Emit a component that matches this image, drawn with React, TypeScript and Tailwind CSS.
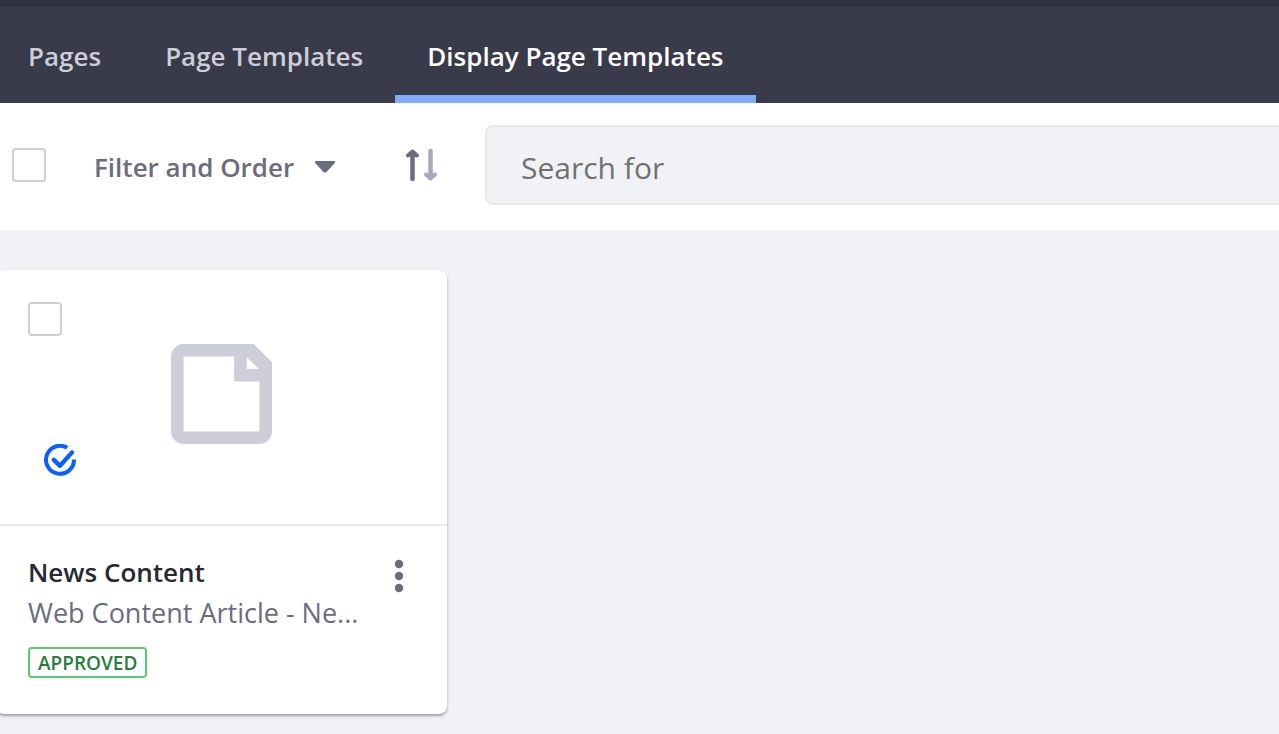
import { useState } from "react";

const tabs = ["Pages", "Page Templates", "Display Page Templates"];

const checkboxClass =
  "block size-[34px] shrink-0 cursor-pointer appearance-none rounded-[4px] border-2 border-[#cdced9] bg-white checked:border-[#0b5fff] checked:bg-[#0b5fff]";

function NavigationBar() {
  const [active, setActive] = useState("Display Page Templates");
  return (
    <nav className="border-t-[7px] border-[#30313f] bg-[#393a4a]">
      <ul className="flex h-24">
        {tabs.map((tab) => (
          <li key={tab} className="flex first:-ml-1">
            <a
              href="#"
              aria-current={tab === active ? "page" : undefined}
              onClick={(event) => {
                event.preventDefault();
                setActive(tab);
              }}
              className={
                tab === active
                  ? "flex items-center border-b-8 border-[#80acff] px-8 pt-2.5 text-[26px] font-semibold whitespace-nowrap text-white"
                  : "flex items-center border-b-8 border-transparent px-8 pt-2.5 text-[26px] font-semibold whitespace-nowrap text-[#cdced9]"
              }
            >
              {tab}
            </a>
          </li>
        ))}
      </ul>
    </nav>
  );
}

function ManagementBar() {
  return (
    <div className="flex items-center overflow-hidden bg-white pt-[22px] pb-[25px] pl-3">
      <input type="checkbox" aria-label="Select all items" className={checkboxClass} />
      <button
        type="button"
        className="ml-12 flex w-[242px] shrink-0 items-center justify-between pt-1 text-[26px] leading-9 font-semibold whitespace-nowrap text-[#6b6c7e]"
      >
        Filter and Order
        <svg width="22" height="14" viewBox="0 0 22 14" fill="currentColor" aria-hidden="true">
          <path d="M2 1h18c1.300 0 1.600 1.100.8 1.900l-8.300 9c-.8.800-2.200.8-3 0L1.200 2.900C.4 2.100.7 1 2 1z" />
        </svg>
      </button>
      <button type="button" aria-label="Reverse sort direction" className="ml-[69px] shrink-0">
        <svg width="33" height="34" viewBox="0 0 33 34" fill="none" aria-hidden="true">
          <path d="M7.500 4.500V31" stroke="#6b6c7e" strokeWidth="4.500" strokeLinecap="round" />
          <path d="M3 7.500L7.500 3.500L12 7.500V7.600L7.500 5.500L3 7.500z" stroke="#6b6c7e" strokeWidth="4" strokeLinecap="round" strokeLinejoin="round" />
          <path d="M25.500 3V29.500" stroke="#a7a9bc" strokeWidth="4.500" strokeLinecap="round" />
          <path d="M21 26.500L25.500 30.500L30 26.500L25.500 28.500z" stroke="#a7a9bc" strokeWidth="4" strokeLinecap="round" strokeLinejoin="round" />
        </svg>
      </button>
      <input
        type="search"
        aria-label="Search for"
        placeholder="Search for"
        className="-mr-2 ml-[47px] h-20 min-w-0 grow rounded-lg border-2 border-[#e7e7ed] bg-[#f1f2f5] px-[34px] pt-1 text-[30px] text-[#272833] placeholder:text-[#717171]"
      />
    </div>
  );
}

function TemplateCard() {
  return (
    <article className="-ml-1 w-[451px] overflow-hidden rounded-lg bg-white shadow-[0_2px_4px_-1px_rgba(0,0,0,0.3),0_2px_2px_rgba(0,0,0,0.16)]">
      <div className="grid h-64 grid-cols-3 border-b-2 border-[#e7e7ed] px-8 py-8">
        <div className="flex flex-col justify-between pb-4">
          <input type="checkbox" aria-label="Select News Content" className={checkboxClass} />
          <svg className="ml-4" width="32" height="32" viewBox="0 0 32 32" fill="none" role="img" aria-label="Default template">
            <path
              d="M23.200 3.800A14 14 0 1 0 30 15.500"
              stroke="#0b5fff"
              strokeWidth="4"
            />
            <path
              d="M9.800 15.800L16 21.800L28 8.400"
              stroke="#0b5fff"
              strokeWidth="4.400"
              strokeLinecap="round"
              strokeLinejoin="round"
            />
          </svg>
        </div>
        <svg className="mt-[42px] justify-self-center" width="101" height="100" viewBox="0 0 16 16" preserveAspectRatio="none" aria-hidden="true">
          <path
            fill="#cdced9"
            fillRule="evenodd"
            d="M13.100 0H2C.9 0 0 .9 0 2v12c0 1.100.9 2 2 2h12c1.100 0 2-.9 2-2V2.900L13.100 0zM12 2.100L13.900 4H12V2.100zM14 14H2V2h8v4h4v8z"
          />
        </svg>
      </div>
      <div className="flex items-start justify-between pt-[26px] pr-[42px] pb-9 pl-8">
        <div className="min-w-0">
          <h2 className="truncate text-[26px] leading-10 font-semibold text-[#272833]">
            <a href="#">News Content</a>
          </h2>
          <p className="truncate text-[27px] leading-[42px] text-[#6b6c7e]">Web Content Article - Ne...</p>
          <span className="mt-[13px] flex w-fit rounded-[4px] border-2 border-[#5aca75] px-2 pt-px text-[19px] leading-[26px] font-semibold text-[#287d3c]">
            APPROVED
          </span>
        </div>
        <button type="button" aria-label="More actions" className="mt-[7px] shrink-0 text-[#6b6c7e]">
          <svg width="12" height="34" viewBox="0 0 12 34" fill="currentColor" aria-hidden="true">
            <circle cx="6" cy="5" r="4.200" />
            <circle cx="6" cy="17" r="4.200" />
            <circle cx="6" cy="29" r="4.200" />
          </svg>
        </button>
      </div>
    </article>
  );
}

export default function App() {
  return (
    <div className="min-h-screen overflow-hidden bg-[#f1f2f5] font-['Open_Sans','Noto_Sans',sans-serif]">
      <NavigationBar />
      <ManagementBar />
      <main className="py-5 pt-10">
        <TemplateCard />
      </main>
    </div>
  );
}
